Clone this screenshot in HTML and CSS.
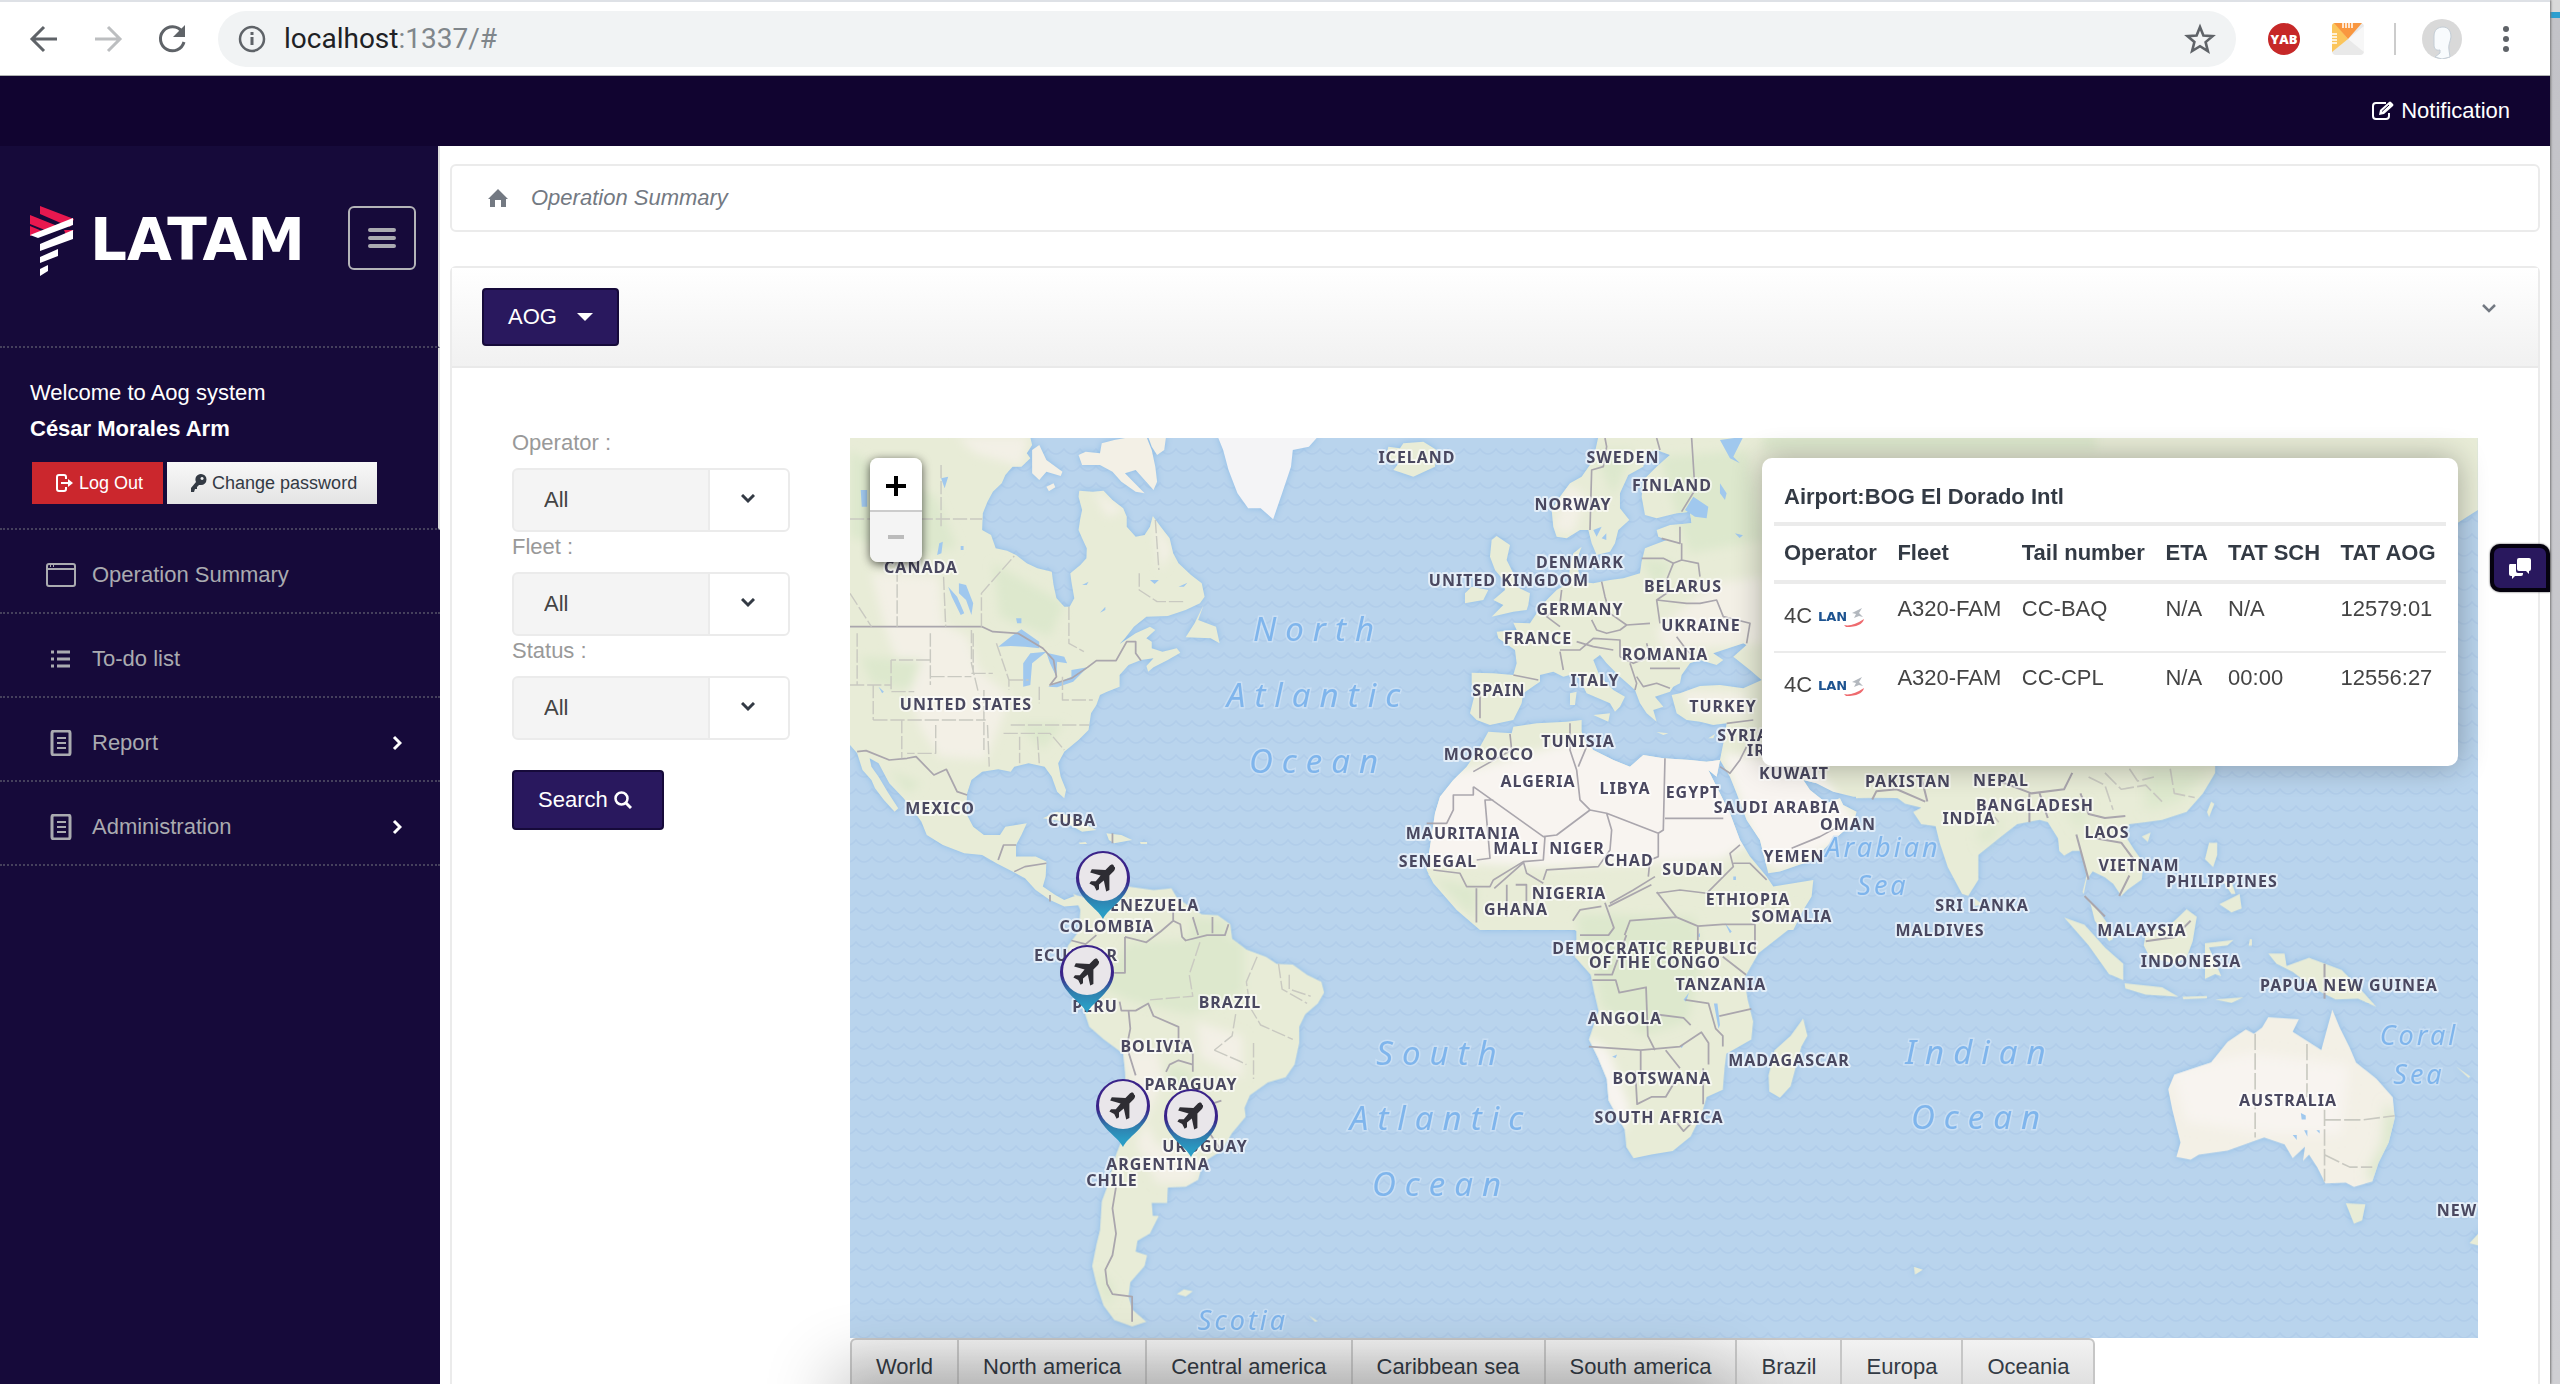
FILE: index.html
```html
<!DOCTYPE html>
<html lang="en">
<head>
  <meta charset="utf-8">
  <title>Operation Summary</title>
  <link rel="stylesheet" href="styles.css">
</head>
<body>

<div class="desktop">
  <div class="window">

    <!-- browser toolbar -->
    <div class="toolbar">
      <button class="tool" aria-label="Back">
        <svg width="32" height="32" viewBox="0 0 32 32"><path d="M29 16H5M16 4L4 16l12 12" fill="none" stroke="#5f6368" stroke-width="3"/></svg>
      </button>
      <button class="tool" aria-label="Forward">
        <svg width="32" height="32" viewBox="0 0 32 32"><path d="M3 16h24M16 4l12 12-12 12" fill="none" stroke="#bcbec0" stroke-width="3"/></svg>
      </button>
      <button class="tool" aria-label="Reload">
        <svg width="32" height="32" viewBox="0 0 32 32"><path d="M26 8.500A12 12 0 1 0 28 19" fill="none" stroke="#5f6368" stroke-width="3"/><path d="M29 2v12H17z" fill="#5f6368"/></svg>
      </button>
      <div class="omnibox">
        <svg width="28" height="28" viewBox="0 0 28 28"><circle cx="14" cy="14" r="12" fill="none" stroke="#5f6368" stroke-width="2.500"/><path d="M14 12v8M14 7v3" stroke="#5f6368" stroke-width="3"/></svg>
        <div class="url" role="textbox" aria-label="Address">localhost<span>:1337/#</span></div>
        <button class="tool" aria-label="Bookmark">
          <svg width="32" height="32" viewBox="0 0 32 32"><path d="M16 4l3.400 8.600 9.200.6-7 5.900 2.300 9L16 23.200 8.100 28l2.300-9-7-5.900 9.200-.6z" fill="none" stroke="#5f6368" stroke-width="2.600"/></svg>
        </button>
      </div>
      <div class="extensions">
        <button class="yab">YAB</button>
        <button class="ext" aria-label="Extension">
          <svg width="32" height="32" viewBox="0 0 32 32"><rect width="32" height="32" rx="4" fill="#e9e9e9"/><path d="M32 3v26L16 16z" fill="#f7f7f7"/><path d="M0 29V3q0-3 3-3l13 16z" fill="#fbc55c"/><path d="M2 0h28L16 16z" fill="#f9973f"/><path d="M11 0v5M14 0v5M17 0v5M20 0v5M0 11h5M0 14h5M0 17h5M0 20h5" stroke="#fff" stroke-width="1.500"/></svg>
        </button>
      </div>
      <div class="profile">
        <span class="separator"></span>
        <button class="avatar" aria-label="Profile">
          <svg width="40" height="40" viewBox="0 0 40 40"><circle cx="20" cy="20" r="20" fill="#d9d9d9"/><path d="M12 17c0-6 4-9 9-9s8 4 8 10c-1 6-3 8-2 13l1 7-8 2-7-2 5-4v-3c-5 1-6-2-6-6z" fill="#f8fbfd" stroke="#c3cdd6"/></svg>
        </button>
        <button class="tool" aria-label="Menu">
          <svg width="32" height="32" viewBox="0 0 32 32" fill="#5f6368"><circle cx="16" cy="6" r="3"/><circle cx="16" cy="16" r="3"/><circle cx="16" cy="26" r="3"/></svg>
        </button>
      </div>
    </div>

    <header class="topbar">
      <a href="#" class="notification">
        <svg width="24" height="20" viewBox="0 0 24 20"><path d="M15 2H5Q2 2 2 5v10q0 3 3 3h10q3 0 3-3v-3" fill="none" stroke="#fff" stroke-width="2"/><path d="M8 14l1-5 9-8q1-1 2 0l2 2q1 1 0 2l-9 8z" fill="#fff"/><path d="M11 10.500l7-6.500" stroke="#110430"/></svg>
        Notification
      </a>
    </header>

    <div class="layout">

      <aside class="sidebar">
        <div class="brand">
          <svg class="logo" width="302" height="72" viewBox="0 0 302 72">
            <path d="M10 0l34 13-4 8-30-13zM0 9l30 12-10 5L0 18zM0 20l12 5-12 5zM34 24l10 0-8 5z" fill="#e8184f"/>
            <path d="M43 12v7L8 32l-8-3zM43 24v9L10 45v-7zM28 43v7L10 57v-6zM18 59v6l-8 5v-7z" fill="#fff"/>
            <text x="60" y="54" class="logo-text">LATAM</text>
          </svg>
          <button class="burger" aria-label="Toggle menu">
            <svg width="28" height="20" viewBox="0 0 28 20"><path d="M2 2h24M2 10h24M2 18h24" stroke="#aaabb0" stroke-width="4" stroke-linecap="round"/></svg>
          </button>
        </div>

        <div class="user">
          <p>Welcome to Aog system</p>
          <p><strong>César Morales Arm</strong></p>
          <div class="user-actions">
            <button class="btn-small logout">
              <svg width="18" height="18" viewBox="0 0 18 18"><path d="M10 5V3q0-2-2-2H3Q1 1 1 3v12q0 2 2 2h5q2 0 2-2v-2" fill="none" stroke="#fff" stroke-width="2"/><path d="M5 8h7V5l5 4-5 4v-3H5z" fill="#fff"/></svg>
              Log Out
            </button>
            <button class="btn-small password">
              <svg width="16" height="18" viewBox="0 0 16 18"><path d="M10 0a5.500 5.500 0 0 1 0 11H8l-2 2v2H4l-1 3H0v-4l5-6A5.500 5.500 0 0 1 10 0zm1 3a1.500 1.500 0 1 0 .1 0z" fill="#333a44" fill-rule="evenodd"/></svg>
              Change password
            </button>
          </div>
        </div>

        <nav class="menu">
          <a href="#">
            <svg width="30" height="24" viewBox="0 0 30 24"><rect x="1" y="1" width="28" height="22" rx="2" fill="none" stroke="#aaabb0" stroke-width="2"/><path d="M1 6h28" stroke="#aaabb0" stroke-width="2"/><path d="M4 3h1M7 3h1" stroke="#aaabb0" stroke-width="2"/></svg>
            Operation Summary
          </a>
          <a href="#">
            <svg width="30" height="24" viewBox="0 0 30 24"><path d="M5 5h3M5 12h3M5 19h3M11 5h13M11 12h13M11 19h13" stroke="#aaabb0" stroke-width="3"/></svg>
            To-do list
          </a>
          <a href="#">
            <svg width="30" height="26" viewBox="0 0 30 26"><rect x="6" y="1" width="18" height="24" rx="2" fill="none" stroke="#aaabb0" stroke-width="3"/><path d="M11 8h9M11 13h9M11 18h9" stroke="#aaabb0" stroke-width="2"/></svg>
            Report
            <svg class="arrow" width="10" height="16" viewBox="0 0 10 16"><path d="M2 2l6 6-6 6" fill="none" stroke="#fff" stroke-width="3"/></svg>
          </a>
          <a href="#">
            <svg width="30" height="26" viewBox="0 0 30 26"><rect x="6" y="1" width="18" height="24" rx="2" fill="none" stroke="#aaabb0" stroke-width="3"/><path d="M11 8h9M11 13h9M11 18h9" stroke="#aaabb0" stroke-width="2"/></svg>
            Administration
            <svg class="arrow" width="10" height="16" viewBox="0 0 10 16"><path d="M2 2l6 6-6 6" fill="none" stroke="#fff" stroke-width="3"/></svg>
          </a>
        </nav>
      </aside>

      <main class="content">
        <div class="breadcrumb">
          <svg width="20" height="18" viewBox="0 0 20 18"><path d="M10 0l10 10h-2v8h-5v-7H7v7H2v-8H0z" fill="#737982"/></svg>
          <em>Operation Summary</em>
        </div>

        <section class="panel">
          <div class="panel-head">
            <button class="btn">AOG
              <svg width="16" height="8" viewBox="0 0 16 8"><path d="M0 0h16L8 8z" fill="#fff"/></svg>
            </button>
            <button class="collapse" aria-label="Collapse">
              <svg width="14" height="9" viewBox="0 0 14 9"><path d="M1 1l6 6 6-6" fill="none" stroke="#737982" stroke-width="2.500"/></svg>
            </button>
          </div>

          <div class="panel-body">
            <form class="filters">
              <label for="operator">Operator :</label>
              <div class="select">
                <select id="operator"><option>All</option></select>
                <svg width="14" height="10" viewBox="0 0 14 10"><path d="M1 1l6 6 6-6" fill="none" stroke="#333a44" stroke-width="3"/></svg>
              </div>
              <label for="fleet">Fleet :</label>
              <div class="select">
                <select id="fleet"><option>All</option></select>
                <svg width="14" height="10" viewBox="0 0 14 10"><path d="M1 1l6 6 6-6" fill="none" stroke="#333a44" stroke-width="3"/></svg>
              </div>
              <label for="status">Status :</label>
              <div class="select">
                <select id="status"><option>All</option></select>
                <svg width="14" height="10" viewBox="0 0 14 10"><path d="M1 1l6 6 6-6" fill="none" stroke="#333a44" stroke-width="3"/></svg>
              </div>
              <button type="button" class="btn search">Search
                <svg width="18" height="18" viewBox="0 0 18 18"><circle cx="7.500" cy="7.500" r="6" fill="none" stroke="#fff" stroke-width="2.500"/><path d="M12 12l5 5" stroke="#fff" stroke-width="3"/></svg>
              </button>
            </form>

            <div class="map-column">
              <div class="map">
                <svg class="world" viewBox="850 438 1628 900">
                  <defs>
                    <pattern id="waves" width="16" height="17" patternUnits="userSpaceOnUse">
                      <rect width="16" height="17" fill="#b9d4ed"/>
                      <path d="M0 12q4 0 8-5q4 5 8 5" fill="none" stroke="#b1cdea" stroke-width="1.500"/>
                    </pattern>
                    <linearGradient id="pin-fill" x1="0" y1="0" x2="0" y2="1">
                      <stop offset="0.450" stop-color="#3a2389"/>
                      <stop offset="0.700" stop-color="#2f7fae"/>
                      <stop offset="0.900" stop-color="#2a9cc4"/>
                    </linearGradient>
                    <filter id="soft"><feGaussianBlur stdDeviation="14"/></filter>
                    <clipPath id="clip-na"><use href="#north-america"/></clipPath>
                    <clipPath id="clip-sa"><use href="#south-america"/></clipPath>
                    <clipPath id="clip-eu"><use href="#eurasia"/></clipPath>
                    <clipPath id="clip-an"><use href="#africa-north"/></clipPath>
                    <clipPath id="clip-as"><use href="#africa-south"/></clipPath>
                    <clipPath id="clip-au"><use href="#australia"/></clipPath>
                    <g id="pin">
                      <path d="M0 41C-5 30-27 20-27 0a27 27 0 0 1 54 0C27 20 5 30 0 41z" fill="url(#pin-fill)"/>
                      <circle cy="-1" r="24" fill="#e9e6ea"/>
                      <path transform="scale(.8)" d="M14-14c2 1 1 4-1 6l-5 5 0 18-4 2-3-14-6 5 0 6-3 2-3-6-6-3 2-3h6l6-7-13-4 2-4 17 1 5-5c2-2 5-3 6 1z" fill="#2e2d33"/>
                    </g>
                  </defs>

                  <rect x="850" y="438" width="1628" height="900" fill="url(#waves)"/>

                  <g class="land">
                    <!-- the Americas -->
                    <g transform="translate(850 430) scale(.3571 .3333)">
                      <path id="north-america" d="M0 0L500 0 510 45 495 70 505 85 480 110 455 110 435 135 425 160 400 185 385 215 372 250 370 300 395 315 408 355 440 362 465 375 495 400 525 415 565 425 570 465 578 505 600 530 615 530 628 505 620 455 617 430 645 405 662 385 663 355 650 325 640 300 645 265 650 240 640 200 642 182 680 185 710 182 735 210 765 235 775 260 775 290 800 320 825 315 840 290 848 258 870 290 895 325 905 370 920 400 955 435 985 460 993 500 980 520 940 540 890 558 830 560 795 590 770 625 755 642 800 610 840 590 855 600 830 625 845 635 845 655 875 665 915 655 925 668 890 690 850 712 835 725 830 708 850 685 815 690 780 705 755 735 755 770 720 785 700 795 690 825 675 850 668 900 640 930 600 965 583 1000 590 1040 605 1080 600 1105 580 1085 565 1040 545 1010 500 1000 460 1010 450 1025 415 1018 370 1025 340 1050 328 1090 325 1150 345 1190 375 1215 420 1215 435 1190 495 1180 480 1215 465 1245 465 1280 520 1280 550 1295 548 1340 540 1370 575 1395 600 1410 625 1400 650 1400 650 1425 600 1430 560 1410 520 1380 490 1345 455 1325 410 1300 370 1275 320 1270 260 1245 215 1215 200 1175 180 1145 150 1105 110 1060 80 1000 55 985 60 1010 80 1040 105 1085 135 1135 125 1145 95 1110 70 1075 60 1050 35 1020 20 970 0 945z"/>
                      <path class="pale" d="M640 75L660 65 700 70 705 40 740 30 790 20 830 20 845 60 855 110 860 155 850 180 800 120 770 130 825 190 800 185 760 155 735 125 700 105 650 105zM835 20L885 20 880 60 860 75 845 50zM510 60L530 45 550 90 595 125 590 138 550 125 530 150 510 130zM550 170l20-10 5 12-18 12z"/>
                      <path class="ice" d="M1030 20L1310 20 1285 50 1240 60 1235 110 1210 190 1185 268 1150 235 1115 235 1085 190 1060 120 1045 60z"/>
                      <path d="M990 525L975 570 1025 590 1035 640 1010 625 940 622 965 580zM540 1165L580 1145 620 1160 690 1200 650 1205 600 1175zM718 1210L760 1215 790 1230 740 1240 725 1230zM640 1238l20-2 4 6-20 0zM812 1236l20 0 0 6-18 0z"/>
                      <g clip-path="url(#clip-na)" filter="url(#soft)">
                        <path class="pale" d="M60 430L250 440 260 580 330 620 360 720 450 800 380 990 250 980 200 900 100 600zM300 20L500 20 480 110 350 70zM680 180L770 240 720 260zM850 260L900 360 870 420z"/>
                        <path class="forest" d="M0 60L60 100 240 200 300 350 180 380 0 320zM400 400L600 520 560 620 420 560zM30 680L200 690 170 780 60 760zM110 1020L200 1060 160 1090zM470 880L600 880 540 960z"/>
                      </g>
                    </g>
                    <g transform="translate(850 820) scale(.3571 .3597)">
                      <path id="south-america" d="M625 205L650 215 690 215 720 190 780 185 850 195 900 190 915 215 950 240 985 262 1030 265 1065 290 1070 330 1110 360 1165 380 1195 400 1240 402 1280 430 1320 450 1328 480 1310 510 1275 540 1258 575 1258 620 1245 680 1220 715 1170 730 1120 765 1105 800 1108 825 1070 870 1040 920 1000 945 985 965 975 1000 940 1020 890 1022 888 1065 845 1065 848 1100 865 1100 840 1150 805 1170 800 1200 832 1210 825 1240 785 1285 780 1325 790 1360 830 1395 790 1408 740 1390 710 1350 690 1290 678 1240 690 1180 700 1140 705 1060 720 1020 745 930 765 880 775 800 770 700 765 650 710 610 670 575 655 530 620 480 605 440 600 400 610 350 640 310 645 250z"/>
                      <path d="M915 1318L935 1305 960 1310 940 1325zM1285 1378l25 15-8 2z"/>
                      <g clip-path="url(#clip-sa)" filter="url(#soft)">
                        <path class="forest" d="M780 340L1100 330 1100 480 950 540 780 500 700 460zM960 270L1060 280 1050 350 950 340zM890 680L960 700 960 760 890 740zM690 1250L740 1300 720 1360z"/>
                        <path class="pale" d="M760 640L860 640 880 720 800 900 860 1010 960 1010 990 950 860 900 800 780zM970 560L1100 600 1100 720 980 660z"/>
                      </g>
                    </g>

                    <!-- Europe, Middle East and northern Africa -->
                    <g transform="translate(1380 430) scale(.3333)">
                      <path id="eurasia" d="M655 20L640 90 605 140 570 160 540 200 515 240 520 290 530 320 560 325 600 300 625 300 635 340 650 375 690 365 705 340 715 300 748 270 720 235 720 190 745 135 790 110 800 70 830 60 870 75 830 110 790 150 785 200 795 255 830 265 890 250 930 245 935 280 870 285 830 300 835 320 860 330 820 345 795 355 785 395 780 430 730 445 690 450 640 460 600 455 595 420 590 390 605 350 580 370 570 410 565 460 530 480 500 510 470 550 450 580 400 578 410 600 350 605 355 625 405 660 410 700 400 735 340 730 275 728 275 760 285 790 270 850 290 870 330 885 400 870 425 820 430 790 480 755 480 735 520 725 550 740 590 730 620 790 690 820 705 845 720 830 735 800 700 780 660 740 640 690 660 675 680 700 720 740 765 780 780 820 800 850 830 875 820 840 850 830 825 800 870 785 880 770 900 760 905 735 930 700 960 690 1010 705 1030 690 1000 670 1090 640 1100 645 1060 680 1110 720 1145 750 1090 775 1020 765 960 768 900 790 875 795 890 850 920 870 960 875 1000 885 1040 880 1030 940 1020 990 1050 1040 1070 1090 1100 1170 1140 1230 1155 1290 1165 1330 1200 1325 1300 1290 1360 1230 1420 1180 1430 1145 1390 1125 1380 1105 1340 1120 1290 1080 1270 1050 1310 1060 1360 1085 1420 1100 1560 1105 1600 1000 3150 950 3200 300 3294 240 3294 0 655 0z"/>
                      <path d="M25 50L60 55 70 40 130 35 170 60 165 110 100 140 40 120 60 95 15 90zM350 318L390 345 380 390 400 430 410 470 450 490 445 525 440 540 400 545 335 560 370 525 340 510 375 480 370 450 345 420 330 380 335 330zM275 470L325 480 310 510 255 520 255 490zM570 790L590 785 585 825 570 825zM640 855L690 850 685 875zM830 906L865 910 850 915zM985 925L1005 912 1000 925z"/>
                      <path id="africa-north" d="M325 905L395 910 400 890 470 880 560 875 605 870 605 905 620 940 640 960 700 990 750 1010 790 975 850 985 930 990 980 995 1020 990 1010 1040 985 1020 1010 1070 1050 1150 1080 1230 1110 1280 1160 1340 1180 1370 1300 1350 1295 1400 1270 1440 1240 1500 300 1500 230 1440 160 1360 140 1320 150 1250 165 1150 180 1100 220 1050 260 1010 300 950z"/>
                      <g clip-path="url(#clip-an)" filter="url(#soft)">
                        <path class="desert" d="M100 1050L300 1010 560 940 700 960 1060 950 1110 1240 1020 1290 500 1310 100 1290z"/>
                      </g>
                      <g clip-path="url(#clip-eu)" filter="url(#soft)">
                        <path class="desert" d="M1030 970L1300 1000 1450 1200 1200 1320 1140 1290z"/>
                        <path class="pale" d="M560 160L620 200 580 310 520 300zM1000 460L1150 440 1150 640 850 660 830 600zM900 780L1100 790 1100 860 940 850z"/>
                        <path class="forest" d="M640 60L760 60 700 200zM840 80L1100 60 1150 330 930 370 900 290zM780 380L880 400 830 480zM1150 0h1000v60h-1000z"/>
                      </g>
                    </g>

                    <!-- southern Africa -->
                    <g transform="translate(1380 820) scale(.3571 .3597)">
                      <path id="africa-south" d="M135 150L150 170 200 230 275 285 350 275 430 265 480 280 530 285 550 310 550 350 545 380 590 430 600 480 612 530 585 610 610 660 635 720 640 780 685 860 690 910 710 940 760 930 820 920 870 880 900 820 915 770 960 750 965 690 970 650 1040 610 1045 560 1030 500 1020 440 1060 370 1150 300 1190 220 1120 200 900 170 200 150z"/>
                      <path d="M1185 552L1197 600 1180 630 1150 740 1120 772 1090 755 1088 710 1105 640 1150 600zM1495 1242l25 8-22 14z"/>
                      <g clip-path="url(#clip-as)" filter="url(#soft)">
                        <path class="forest" d="M550 260L880 270 900 400 860 560 740 600 620 520 600 420 560 330zM150 160L270 190 260 270z"/>
                        <path class="desert" d="M580 600L640 640 700 800 680 880 620 760z"/>
                      </g>
                    </g>

                    <!-- southern Asia and Oceania -->
                    <g transform="translate(1860 740) scale(.4082 .4107)">
                      <path d="M-10 20L870 20 870 80 840 130 800 175 740 195 700 200 660 205 645 225 670 265 695 300 690 340 655 365 640 380 620 350 600 335 570 320 555 340 548 375 580 410 605 445 620 485 610 490 575 440 565 400 545 370 555 330 540 270 520 270 500 282 488 270 485 240 460 200 440 195 410 200 385 205 340 240 290 280 290 340 265 380 250 375 215 310 195 250 185 210 150 205 130 175 150 165 110 155 90 140 -10 142z"/>
                      <path d="M690 235L712 225 705 248zM850 175L860 150 868 155 855 188zM855 250L875 250 875 280 865 310 845 290zM880 400L930 375 935 410 910 420zM280 385L300 400 282 405zM500 432L550 450 600 505 645 545 645 585 610 570 560 500zM648 592L740 602 780 625 700 620 650 605zM700 470L760 450 800 412 825 430 815 490 800 530 770 545 710 530 695 500zM845 495L915 487 900 500 855 505 885 575 870 570 845 582zM1000 520L1040 520 1045 550 1100 530 1180 560 1220 600 1265 650 1220 630 1165 632 1120 610 1060 565 1020 545zM790 625l60-2 0 6-58 2zM870 632l70-6-30 14zM955 485l5 0 0 16-8 0zM890 345l20 0 10 30-10 0zM1190 1128L1238 1130 1230 1170 1210 1178zM1530 1185L1493 1225 1530 1235zM1460 795l35 24-4 4z"/>
                      <path id="australia" class="pale" d="M985 700L1000 675 1075 680 1060 710 1130 755 1145 700 1157 657 1175 700 1200 750 1215 785 1265 825 1305 870 1310 920 1295 980 1270 1030 1255 1075 1210 1088 1190 1078 1140 1080 1120 1040 1100 1010 1085 1025 1090 990 1060 1018 1040 985 990 968 900 1000 830 1010 810 1022 775 1015 785 980 765 900 755 850 770 815 860 785 900 735 945 705 965 715z"/>
                      <g clip-path="url(#clip-au)" filter="url(#soft)">
                        <path class="desert" d="M760 800L960 760 1200 790 1180 960 1000 960 800 930z"/>
                        <path class="forest" d="M1290 880L1330 940 1270 1080 1240 1060 1280 980z"/>
                      </g>
                      <path class="forest" d="M290 220L360 190 330 230 300 260zM700 70L860 70 780 150 700 170zM500 150L560 160 540 220z" filter="url(#soft)"/>
                    </g>
                  </g>

                  <!-- lakes -->
                  <g class="lakes">
                    <path transform="translate(850 430) scale(.3571 .3333)" d="M415 650L450 620 480 598 530 635 530 655 490 650 450 648zM485 770L485 700 505 670 550 665 510 700 505 765zM550 668L600 680 608 700 580 695 578 740 560 700zM555 770L620 740 620 720 665 712 650 728 625 755 580 772zM305 460L325 465 345 520 340 555 325 510 305 490zM275 470L300 500 320 550 310 555 285 500zM465 565l15 0 0 15-12 0zM250 340l10-5-4 35-12 5zM30 180l18 0 0 50-15 0zM255 145l20-5-10 35zM840 450l25 0-12 12zM920 470l25-12-10 12zM80 770l15 15-5 5zM650 465l18-10-5 10zM700 548l15-18 0 10zM310 348l8 0 0 12-8 0z"/>
                    <path transform="translate(1380 430) scale(.3333)" d="M1020 30L1090 20 1060 80 1080 100 1050 85zM940 200L985 230 980 265 945 260 915 240zM640 300l25-10-15 30zM665 325l14-15 0 20zM1065 310l24 6-10 8zM1020 160l20 30-5 20-15-20zM1060 1340l8 0 0 10-8 0z"/>
                    <path transform="translate(1380 820) scale(.3571 .3597)" d="M965 285l20 25-5 5zM935 510L945 510 952 570 948 580zM850 500l15-20-8 25zM650 658l14-6-4 10zM888 322l8-8 0 12zM840 630l15-12-10 16z"/>
                    <path transform="translate(1860 740) scale(.4082 .4107)" d="M1080 908l12 6 0 10-10 0zM1088 950l8 0 0 16zM1060 962l10 0 0 12zM1118 950l8 0 0 8z"/>
                  </g>

                  <!-- borders -->
                  <g class="borders">
                    <g transform="translate(850 430) scale(.3571 .3333)">
                      <path d="M0 590L370 590 400 605 470 610 540 655 570 690 578 740 560 765 620 745 665 712 690 692 745 692 775 635 800 635 800 670 815 692M20 965L45 962 110 990 160 985 185 980 235 1035 270 1018 300 1085 328 1095M415 1290L430 1245 465 1245M460 1325L490 1310 550 1300M735 1210v30M560 1395v20"/>
                      <path class="state" d="M0 267L370 267M255 105V290M132 415V590M262 440L268 590M368 590V490L460 378M613 530V640L655 665M0 490L60 590M20 610V765M0 765H115M115 690V785H180M225 610V765M225 690H115M345 610V730M225 740H340M340 730H400M65 765V870M65 870H380M145 870V985M375 780V960M240 885V970H160M385 885L390 1010M475 920V1000M525 920L530 1000M430 910H560L600 960M450 885H670M595 740V810H680M530 770V820M410 640L445 750V780M445 750H500M855 270L865 420M810 430V480L860 515H935M340 600V700L360 790"/>
                    </g>
                    <g transform="translate(850 820) scale(.3571 .3597)">
                      <path d="M745 1020L735 1080 745 1150 735 1210 715 1250 720 1290 735 1318 790 1325V1395M770 325L830 340 870 310 905 280 925 290 930 325 940 335 1000 320 1050 320 1060 290M960 270L975 320M1015 270V315M770 325V425H740M755 505L760 530 800 530 835 510 850 545 920 575 920 610 960 650 960 700M885 700L895 680 920 668 960 680M780 530L785 580 775 630 800 710M620 335L660 345 690 320M905 280V255M1010 790L1040 780M1000 860L1040 920"/>
                      <path class="state" d="M980 340L950 430 960 490 840 500M1140 380L1110 450 1120 520 1150 570 1240 610M1200 400L1210 470 1280 510M1020 640L1090 670 1110 680M1130 620V720M1080 540L1070 600 1020 640M1230 430V470L1290 490"/>
                    </g>
                    <path transform="translate(1380 430) scale(.3333)" d="M675 24L680 50 670 110 635 120 630 300M830 24L840 60M935 24L945 180 905 245M900 290V340L845 325M785 385L850 385 880 400 905 390 955 400 960 440M905 390V340M880 400L860 450 860 490 830 510 840 580M830 510L920 520 960 520 1010 510 1030 560 1110 580 1100 640M665 455L675 500 690 550 740 585 810 580M635 570L650 600 680 610 720 600 740 585M545 480L540 520 500 560 540 590M540 660L600 660 640 625 720 630 720 680M400 735L475 750M300 790V865M540 665L550 720M590 635L640 650 700 660M720 680L760 700 810 680 800 640M810 715H900M770 740L790 770 830 760 870 775M750 700L770 760 765 780M890 620L920 660 940 680M390 912L395 960 280 1025M280 1070V1095H220V1140L200 1180 140 1180M280 1070L490 1220 530 1215 630 1140 600 1110 590 1020 570 960 570 880M595 1010L620 950M630 1140L680 1150 835 1210 850 1200 855 985M855 1165H1030M835 1210V1280L810 1290 805 1340M680 1150L695 1200 690 1260 655 1310 500 1320 490 1350M495 1220L490 1290 430 1295 340 1350M340 1110H315L330 1285 290 1290M340 1350L330 1370 260 1370 240 1330 160 1320M430 1295L440 1330 490 1360M690 1420L760 1380 825 1340M830 1390L900 1380 980 1390 1060 1310 1050 1270 1080 1245M1060 1300L1110 1300 1160 1350M1235 1255L1320 1220 1375 1190M1020 1010L1050 1030 1080 990 1100 950M1040 880L1120 870"/>
                    <path transform="translate(1380 820) scale(.3571 .3597)" d="M270 190V285M320 190L400 120M355 180V270M380 180L410 180 410 260M540 280L560 250 620 240M630 230L655 300 640 320 560 320M760 180L640 240M775 200L830 270 700 280 685 320M830 270L890 295 960 290 1050 290M890 295L890 340M1050 290V370M960 380L1025 430M595 445H660L670 480 745 465 750 600 770 640M585 630L730 640 840 630 900 590 920 620V680M730 640V700M715 700L720 790 760 770 800 770 830 720M800 640L840 690M770 540L850 550 870 570M855 500L920 510 940 580 960 600 960 630M950 545L1040 525M600 430L650 430 690 320M905 690V790M830 840L850 865 870 845"/>
                    <g transform="translate(1860 740) scale(.4082 .4107)">
                      <path d="M30 145L40 125 90 120 160 150M150 90L165 150M340 100L420 130 500 120 520 80M415 130V200M440 130L460 190M540 130L560 180 600 190 650 185M530 230L560 340M580 240L640 250 670 290M635 380L650 350 660 330M700 490L770 480 810 440M1138 545V630M550 380L600 430"/>
                      <path class="state" d="M968 715V968M1095 740V870M1138 900V1075M1138 925H1230L1310 915M1138 1010L1200 1040 1255 1040M600 80L640 120 700 110 740 150M660 70L680 100 720 90M560 90L600 110 620 170M760 70L770 130 820 140M300 150L340 200"/>
                    </g>
                  </g>

                  <g class="sea-label">
                    <text x="1318" y="641">North</text><text x="1318" y="707">Atlantic</text><text x="1318" y="773">Ocean</text>
                    <text x="1441" y="1065">South</text><text x="1441" y="1130">Atlantic</text><text x="1441" y="1196">Ocean</text>
                    <text x="1980" y="1064">Indian</text><text x="1980" y="1129">Ocean</text>
                  </g>
                  <g class="sea-label small">
                    <text x="1883" y="857">Arabian</text><text x="1883" y="895">Sea</text>
                    <text x="2419" y="1045">Coral</text><text x="2419" y="1084">Sea</text>
                    <text x="1243" y="1330">Scotia</text>
                  </g>
                  <g class="country">
                    <text x="921" y="573">CANADA</text><text x="966" y="710">UNITED STATES</text><text x="940" y="814">MEXICO</text><text x="1072" y="826">CUBA</text>
                    <text x="1149" y="911">VENEZUELA</text><text x="1107" y="932">COLOMBIA</text><text x="1076" y="961">ECUADOR</text><text x="1095" y="1012">PERU</text>
                    <text x="1230" y="1008">BRAZIL</text><text x="1157" y="1052">BOLIVIA</text><text x="1191" y="1090">PARAGUAY</text><text x="1205" y="1152">URUGUAY</text>
                    <text x="1158" y="1170">ARGENTINA</text><text x="1112" y="1186">CHILE</text>
                    <text x="1417" y="463">ICELAND</text><text x="1623" y="463">SWEDEN</text><text x="1672" y="491">FINLAND</text><text x="1573" y="510">NORWAY</text>
                    <text x="1580" y="568">DENMARK</text><text x="1509" y="586">UNITED KINGDOM</text><text x="1683" y="592">BELARUS</text><text x="1580" y="615">GERMANY</text>
                    <text x="1701" y="631">UKRAINE</text><text x="1538" y="644">FRANCE</text><text x="1665" y="660">ROMANIA</text><text x="1595" y="686">ITALY</text>
                    <text x="1499" y="696">SPAIN</text><text x="1723" y="712">TURKEY</text><text x="1743" y="741">SYRIA</text><text x="1769" y="756">IRAQ</text>
                    <text x="1578" y="747">TUNISIA</text><text x="1489" y="760">MOROCCO</text><text x="1538" y="787">ALGERIA</text><text x="1625" y="794">LIBYA</text>
                    <text x="1693" y="798">EGYPT</text><text x="1794" y="779">KUWAIT</text><text x="1777" y="813">SAUDI ARABIA</text><text x="1848" y="830">OMAN</text>
                    <text x="1463" y="839">MAURITANIA</text><text x="1516" y="854">MALI</text><text x="1577" y="854">NIGER</text><text x="1629" y="866">CHAD</text>
                    <text x="1438" y="867">SENEGAL</text><text x="1693" y="875">SUDAN</text><text x="1794" y="862">YEMEN</text><text x="1569" y="899">NIGERIA</text>
                    <text x="1748" y="905">ETHIOPIA</text><text x="1516" y="915">GHANA</text><text x="1792" y="922">SOMALIA</text>
                    <text x="1655" y="954">DEMOCRATIC REPUBLIC</text><text x="1655" y="968">OF THE CONGO</text><text x="1721" y="990">TANZANIA</text>
                    <text x="1625" y="1024">ANGOLA</text><text x="1789" y="1066">MADAGASCAR</text><text x="1662" y="1084">BOTSWANA</text><text x="1659" y="1123">SOUTH AFRICA</text>
                    <text x="1908" y="787">PAKISTAN</text><text x="2001" y="786">NEPAL</text><text x="2035" y="811">BANGLADESH</text><text x="1969" y="824">INDIA</text>
                    <text x="2107" y="838">LAOS</text><text x="2139" y="871">VIETNAM</text><text x="2222" y="887">PHILIPPINES</text><text x="1982" y="911">SRI LANKA</text>
                    <text x="1940" y="936">MALDIVES</text><text x="2142" y="936">MALAYSIA</text><text x="2191" y="967">INDONESIA</text><text x="2349" y="991">PAPUA NEW GUINEA</text>
                    <text x="2288" y="1106">AUSTRALIA</text><text x="2457" y="1216">NEW</text>
                  </g>

                  <use href="#pin" x="1103" y="878"/>
                  <use href="#pin" x="1087" y="972"/>
                  <use href="#pin" x="1123" y="1106"/>
                  <use href="#pin" x="1191" y="1116"/>
                </svg>

                <div class="zoom">
                  <button aria-label="Zoom in"><svg width="20" height="20" viewBox="0 0 20 20"><path d="M0 10h20M10 0v20" stroke="#000" stroke-width="4"/></svg></button>
                  <button aria-label="Zoom out" disabled><svg width="16" height="4" viewBox="0 0 16 4"><path d="M0 2h16" stroke="#bbb" stroke-width="4"/></svg></button>
                </div>

                <div class="airport">
                  <table>
                    <thead>
                      <tr><th colspan="6">Airport:BOG El Dorado Intl</th></tr>
                      <tr><th>Operator</th><th>Fleet</th><th>Tail number</th><th>ETA</th><th>TAT SCH</th><th>TAT AOG</th></tr>
                    </thead>
                    <tbody>
                      <tr>
                        <td class="operator">4C <svg width="48" height="20" viewBox="0 0 48 20"><text x="0" y="14" class="lan">LAN</text><path d="M26 18q8 2 20-6-2 8-18 8z" fill="#ee6a6e"/><path d="M34 6l10-5-3 5 4 4-4-1-5 2 2-4z" fill="#b3b8be"/></svg></td>
                        <td>A320-FAM</td><td>CC-BAQ</td><td>N/A</td><td>N/A</td><td>12579:01</td>
                      </tr>
                      <tr>
                        <td class="operator">4C <svg width="48" height="20" viewBox="0 0 48 20"><text x="0" y="14" class="lan">LAN</text><path d="M26 18q8 2 20-6-2 8-18 8z" fill="#ee6a6e"/><path d="M34 6l10-5-3 5 4 4-4-1-5 2 2-4z" fill="#b3b8be"/></svg></td>
                        <td>A320-FAM</td><td>CC-CPL</td><td>N/A</td><td>00:00</td><td>12556:27</td>
                      </tr>
                    </tbody>
                  </table>
                </div>
              </div>

              <div class="regions">
                <button>World</button>
                <button>North america</button>
                <button>Central america</button>
                <button>Caribbean sea</button>
                <button>South america</button>
                <button>Brazil</button>
                <button>Europa</button>
                <button>Oceania</button>
              </div>
            </div>
          </div>
        </section>
      </main>
    </div>

    <button class="chat" aria-label="Chat">
      <svg width="24" height="22" viewBox="0 0 24 22"><path d="M2 7h6v7q0 2 2 2h5v1q0 2-2 2H7l-3 3v-3H3q-2 0-2-2V9q0-2 1-2z" fill="#fff"/><path d="M11 1h10q2 0 2 2v9q0 2-2 2v3l-3-3h-7q-2 0-2-2V3q0-2 2-2z" fill="#fff"/></svg>
    </button>
  </div>
  <div class="dock-shadow"></div>
</div>

</body>
</html>
```

FILE: styles.css
```css
* {
  box-sizing: border-box;
}

body {
  margin: 0;
  font-family: "Liberation Sans", Arial, sans-serif;
  font-size: 22px;
  line-height: 30px;
  color: #333a44;
}

button,
select {
  font: inherit;
  color: inherit;
  cursor: pointer;
}

a {
  color: inherit;
  text-decoration: none;
}

p {
  margin: 0;
}

svg {
  display: block;
  flex: none;
}

/* strip of the desktop seen right of the window */
.desktop {
  position: relative;
  height: 100vh;
  overflow: hidden;
  padding-right: 10px;
  background: linear-gradient(#d9d9d9 12px, #2b9fd0 12px, #2b9fd0 18px, #c3c3c8 18px, #cfcfd3);
}

/* shadow of the dock under the screen */
.dock-shadow {
  position: absolute;
  top: 100%;
  left: 33%;
  width: 34%;
  height: 40px;
  box-shadow: 0 0 70px 10px rgba(0, 0, 0, 0.3);
  pointer-events: none;
}

.window {
  position: relative;
  height: 100%;
  display: flex;
  flex-direction: column;
  background: #fff;
  box-shadow: 1px 0 2px #777;
}

/* Browser toolbar */
.toolbar {
  display: flex;
  align-items: center;
  gap: 28px;
  height: 76px;
  flex: none;
  padding: 0 26px;
  border-top: 2px solid #dee1e6;
  border-bottom: 1px solid #b0b3b2;
}

.tool {
  display: flex;
  justify-content: center;
  width: 36px;
  padding: 0;
  border: none;
  background: none;
}

.omnibox {
  flex: 1;
  display: flex;
  align-items: center;
  gap: 18px;
  height: 56px;
  padding: 0 18px 0 20px;
  border-radius: 28px;
  background: #f1f3f4;
}

.url {
  flex: 1;
  font-family: Roboto, sans-serif;
  font-size: 28px;
  color: #202124;
}

.url span {
  color: #80868b;
}

.extensions {
  display: flex;
  gap: 32px;
  padding-left: 4px;
}

.extensions button,
.avatar {
  padding: 0;
  border: none;
  background: none;
}

.extensions .yab {
  width: 32px;
  height: 32px;
  border-radius: 50%;
  background: #c62828;
  color: #fff;
  font-family: "Open Sans", sans-serif;
  font-size: 13px;
  font-weight: 800;
  line-height: 32px;
}

.profile {
  display: flex;
  align-items: center;
  gap: 26px;
  padding-left: 2px;
}

.separator {
  width: 2px;
  height: 32px;
  background: #ccc;
}

/* App */
.topbar {
  display: flex;
  justify-content: flex-end;
  align-items: center;
  height: 70px;
  flex: none;
  padding-right: 40px;
  background: #110430;
}

.notification {
  display: flex;
  align-items: center;
  gap: 6px;
  color: #fff;
}

.layout {
  flex: 1;
  display: flex;
  min-height: 0;
}

.sidebar {
  width: 440px;
  flex: none;
  background: #160a3a;
  color: #fff;
}

.brand {
  display: flex;
  align-items: flex-start;
  gap: 16px;
  height: 202px;
  padding: 60px 22px 0 30px;
  border-right: 2px solid #ddd;
  border-bottom: 2px dotted #45405c;
}

.logo-text {
  font-family: "DejaVu Sans", sans-serif;
  font-size: 58px;
  font-weight: bold;
  fill: #fff;
}

.burger {
  display: flex;
  align-items: center;
  justify-content: center;
  width: 68px;
  height: 64px;
  flex: none;
  padding: 0;
  border: 2px solid #b4b4b8;
  border-radius: 6px;
  background: none;
}

.user {
  height: 182px;
  padding: 27px 30px 0;
  border-right: 2px solid #ddd;
  border-bottom: 2px dotted #45405c;
}

.user p {
  line-height: 36px;
}

.user-actions {
  display: flex;
  gap: 4px;
  padding: 15px 2px 0;
}

.btn-small {
  display: flex;
  align-items: center;
  gap: 5px;
  height: 42px;
  padding: 0 20px 0 24px;
  border: none;
  font-size: 18px;
}

.logout {
  background: #cb272d;
}

.password {
  background: linear-gradient(#f8f8f8, #e4e4e4);
  color: #333a44;
}

.menu a {
  display: flex;
  align-items: center;
  gap: 16px;
  height: 84px;
  padding: 7px 38px 0 46px;
  border-bottom: 2px dotted #45405c;
  color: #aaabb0;
}

.menu .arrow {
  margin-left: auto;
}

.content {
  flex: 1;
  display: flex;
  flex-direction: column;
  gap: 34px;
  min-width: 0;
  padding: 18px 10px 0;
}

.breadcrumb {
  display: flex;
  align-items: center;
  gap: 23px;
  height: 68px;
  flex: none;
  padding: 0 36px;
  border: 2px solid #ebebeb;
  border-radius: 6px;
  color: #737982;
}

.panel {
  flex: none;
  border: 2px solid #ebebeb;
  border-radius: 6px;
}

.panel-head {
  display: flex;
  justify-content: space-between;
  padding: 20px 42px 20px 30px;
  border-bottom: 2px solid #e9e9e9;
  background: linear-gradient(#fff, #f1f1f1);
}

.btn {
  display: flex;
  align-items: center;
  gap: 20px;
  height: 58px;
  padding: 0 24px;
  border: 2px solid #160a3a;
  border-radius: 4px;
  background: #29185e;
  color: #fff;
}

.collapse {
  align-self: flex-start;
  padding: 16px 0;
  border: none;
  background: none;
}

.panel-body {
  display: flex;
  gap: 60px;
  padding: 60px;
}

.filters {
  width: 278px;
  flex: none;
}

.filters label {
  display: block;
  margin-bottom: 10px;
  color: #999;
}

.select {
  position: relative;
}

.select select {
  display: block;
  width: 100%;
  height: 64px;
  padding: 0 30px;
  border: 2px solid #ebebeb;
  border-radius: 6px;
  appearance: none;
  color: #444;
  background: linear-gradient(to left, #fff 78px, #ebebeb 78px, #ebebeb 80px, #f4f4f4 80px);
}

.select svg {
  position: absolute;
  top: 26px;
  right: 35px;
  pointer-events: none;
}

.search {
  gap: 6px;
  min-width: 152px;
  height: 60px;
  margin-top: 30px;
}

/* Map */
.map-column {
  flex: 1;
  min-width: 0;
  padding-top: 10px;
}

.map {
  position: relative;
}

.world {
  width: 100%;
}

.land {
  fill: #e8ecd7;
  filter: drop-shadow(0 0 3px #8dbce6);
}

.land .pale {
  fill: #f3f0e6;
}

.land .ice {
  fill: #f4f4f6;
}

.land .desert {
  fill: #f8f4f0;
}

.land .forest {
  fill: #dde8cd;
}

.lakes {
  fill: #a0c8ee;
}

.borders {
  fill: none;
  stroke: #aaa6ad;
  stroke-width: 5;
  stroke-linejoin: round;
}

.borders .state {
  stroke: #c9c9c1;
  stroke-width: 4;
  stroke-dasharray: 40 8;
}

.country {
  font-family: "Noto Sans", sans-serif;
  font-size: 16px;
  font-weight: 700;
  letter-spacing: 1px;
  text-anchor: middle;
  fill: #4a4860;
  stroke: rgba(255, 255, 255, 0.6);
  stroke-width: 4px;
  stroke-linejoin: round;
  paint-order: stroke;
}

.sea-label {
  font-family: "Noto Sans", sans-serif;
  font-size: 33px;
  font-style: italic;
  letter-spacing: 9px;
  text-anchor: middle;
  fill: #7fb5ec;
  stroke: rgba(205, 225, 245, 0.8);
  stroke-width: 3px;
  paint-order: stroke;
}

.sea-label.small {
  font-size: 27px;
  letter-spacing: 3px;
}

.zoom {
  position: absolute;
  top: 20px;
  left: 20px;
  border-radius: 8px;
  overflow: hidden;
  box-shadow: 0 2px 10px rgba(0, 0, 0, 0.65);
}

.zoom button {
  display: flex;
  align-items: center;
  justify-content: center;
  width: 52px;
  height: 52px;
  padding: 4px 0 0;
  border: none;
  background: #fff;
}

.zoom button + button {
  padding: 0;
  border-top: 2px solid #ccc;
  background: #f4f4f4;
}

.airport {
  position: absolute;
  top: 20px;
  right: 20px;
  width: 696px;
  padding: 6px 12px 44px;
  border-radius: 10px;
  background: #fff;
  box-shadow: 0 0 30px rgba(0, 0, 0, 0.3);
}

.airport table {
  width: 100%;
  border-collapse: collapse;
}

.airport th {
  padding: 12px 10px;
  border-bottom: 4px solid #ebebeb;
  text-align: left;
  white-space: nowrap;
}

.airport tr:first-child th {
  padding-top: 18px;
  padding-bottom: 10px;
}

.airport td {
  height: 70px;
  padding: 10px 10px 0;
  vertical-align: top;
  color: #444;
}

.airport tbody tr + tr td {
  border-top: 2px solid #ebebeb;
}

.airport .operator {
  padding-top: 17px;
  white-space: nowrap;
}

.operator svg {
  display: inline-block;
  vertical-align: middle;
}

.lan {
  font-family: "DejaVu Sans", sans-serif;
  font-size: 13px;
  font-weight: bold;
  fill: #1d5390;
}

.regions {
  display: flex;
}

.regions button {
  height: 58px;
  margin-left: -2px;
  padding: 0 24px;
  border: 2px solid #c6c6c6;
  background: linear-gradient(#f2f2f2, #dcdcdc);
}

.regions button:first-child {
  margin-left: 0;
  border-top-left-radius: 6px;
}

.regions button:last-child {
  border-top-right-radius: 6px;
}

/* floats on the right edge over the page */
.chat {
  position: absolute;
  top: 544px;
  right: 0;
  display: flex;
  align-items: center;
  justify-content: center;
  width: 60px;
  height: 48px;
  padding: 0;
  border: 4px solid #05020f;
  border-radius: 10px 10px 0 10px;
  background: #29185e;
  box-shadow: 0 0 2px #333;
}
```
